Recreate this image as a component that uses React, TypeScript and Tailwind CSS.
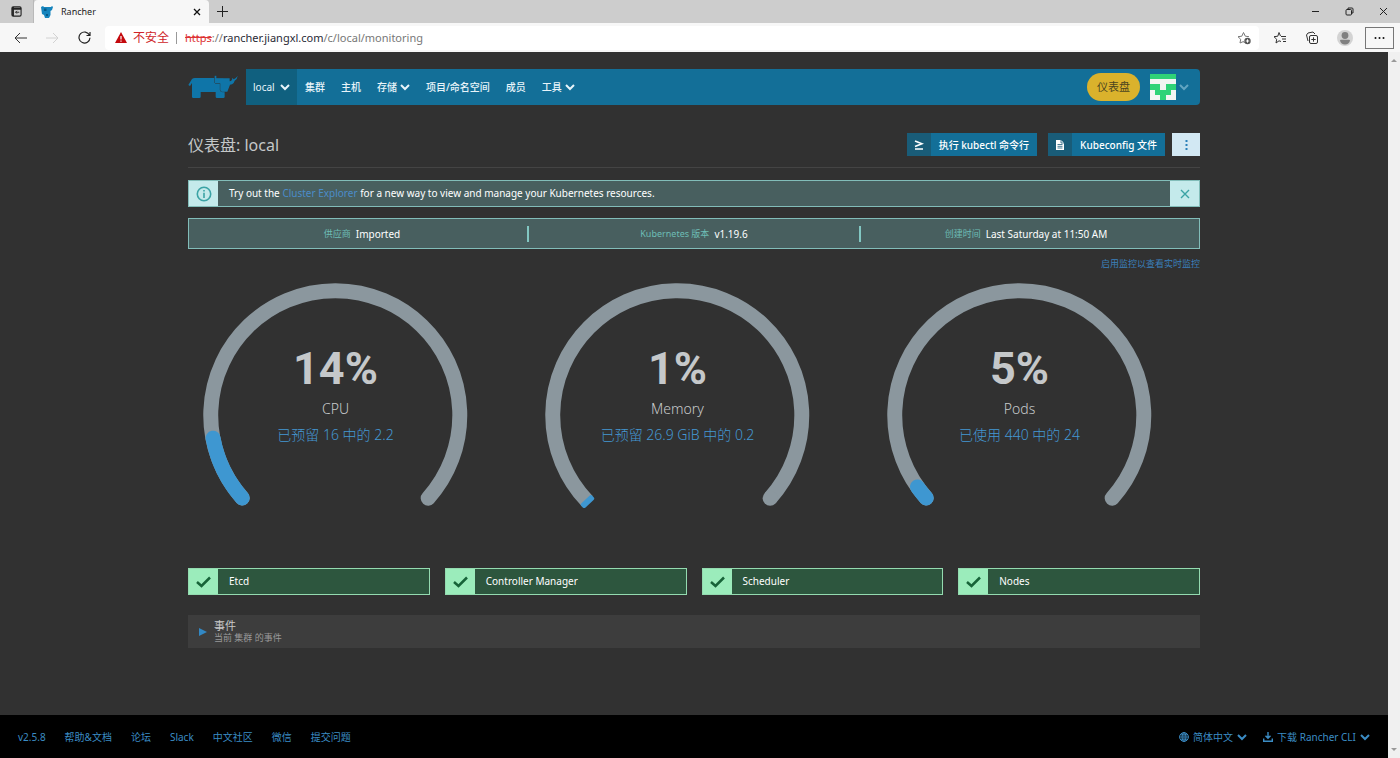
import type { ReactNode } from "react";

const GAUGES = [
  { name: "CPU", value: 14, detail: "已预留 16 中的 2.2", end: 10.5 },
  { name: "Memory", value: 1, detail: "已预留 26.9 GiB 中的 0.2", end: null },
  { name: "Pods", value: 5, detail: "已使用 440 中的 24", end: 35 },
];

const NAV = [
  { label: "集群" },
  { label: "主机" },
  { label: "存储", menu: true },
  { label: "项目/命名空间" },
  { label: "成员" },
  { label: "工具", menu: true },
];

const FOOTER_LINKS = ["v2.5.8", "帮助&文档", "论坛", "Slack", "中文社区", "微信", "提交问题"];

function Chevron({ className = "" }: { className?: string }) {
  return (
    <svg className={`h-[10px] w-[10px] shrink-0 ${className}`} viewBox="0 0 10 10" fill="none" stroke="currentColor" strokeWidth="2">
      <path d="M1 3 L5 7 L9 3" />
    </svg>
  );
}

function Bull() {
  return (
    <svg className="h-6 w-[50px]" viewBox="24 46 150 72" fill="#0f75a8">
      <path d="M25 76 L36 58 Q39 55 45 55 H130 V115 H111 Q107 115 107 111 V97 H62 V111 Q62 115 58 115 H40 Q36 115 36 111 V70 L30 79 Z" />
      <path d="M120 90 H134 V111 Q134 115 130 115 H120 Z" />
      <path
        d="M104 48 H109 V56 H149 V65 Q157 64 157 54 L161 59 Q167 57 173 48 Q172 59 164 63 L161 70 Q157 75 150 75 L142 96 H126 Q121 96 121 91 V71 H108 Q104 71 104 67 Z"
        stroke="#313131"
        strokeWidth="2.5"
        paintOrder="stroke"
      />
    </svg>
  );
}

/* ---------- browser chrome ---------- */

function TabStrip() {
  return (
    <div className="flex h-[23px] items-stretch bg-[#cdcdcd] text-[#222]">
      <div className="flex w-[34px] items-center justify-center border-r border-[#b9b9b9]">
        <svg className="h-[11px] w-[11px]" viewBox="0 0 12 12" fill="none" stroke="#222" strokeWidth="1.2">
          <rect x="1" y="1" width="10" height="10" rx="1.5" />
          <path d="M1 3 H11 M2.2 1 V11" strokeWidth="2" />
          <path d="M9 6.8 H5 M6.5 5.3 L5 6.8 L6.5 8.3" strokeWidth="1" />
        </svg>
      </div>
      <div className="flex w-[175px] items-center rounded-t bg-[#f7f7f7] pr-2 pl-[7px]">
        <svg className="h-3 w-3" viewBox="0 0 12 12">
          <path d="M0 1 L2 0 L3 1 H10 L11 0 L12 1 L11 4 L9.5 5 V9 L8 12 H4 L3 9 L1 8 Z" fill="#1584bd" />
          <path d="M3 2.5 H5.5 V5 H3 Z M5 8 H7 V10 H5 Z" fill="#075a88" />
        </svg>
        <span className="ml-2 flex-1 text-[9px] leading-3">Rancher</span>
        <button aria-label="Close tab">
          <svg className="h-2 w-2" viewBox="0 0 8 8" stroke="#111" strokeWidth="1.3">
            <path d="M1 1 L7 7 M7 1 L1 7" />
          </svg>
        </button>
      </div>
      <button className="flex w-[26px] items-center justify-center" aria-label="New tab">
        <svg className="h-[11px] w-[11px]" viewBox="0 0 11 11" stroke="#222">
          <path d="M5.5 0 V11 M0 5.5 H11" />
        </svg>
      </button>
      <div className="ml-auto flex items-center gap-[25px] pr-3">
        <button aria-label="Minimize">
          <svg className="h-[9px] w-[9px]" viewBox="0 0 9 9" stroke="#222"><path d="M1 4.5 H8" /></svg>
        </button>
        <button aria-label="Restore">
          <svg className="h-[9px] w-[9px]" viewBox="0 0 9 9" fill="none" stroke="#222">
            <rect x="1" y="2.5" width="5.5" height="5.5" rx="1" />
            <path d="M3 2 V1 H7 Q8 1 8 2 V6 H7" />
          </svg>
        </button>
        <button aria-label="Close">
          <svg className="h-[9px] w-[9px]" viewBox="0 0 9 9" stroke="#222"><path d="M1 1 L8 8 M8 1 L1 8" /></svg>
        </button>
      </div>
    </div>
  );
}

function StarIcon({ children, color }: { children: ReactNode; color: string }) {
  return (
    <svg className="h-[14px] w-[14px]" viewBox="0 0 14 14" fill="none" stroke={color} strokeLinejoin="round">
      {children}
    </svg>
  );
}

function AddressBar() {
  return (
    <div className="flex h-[29px] items-center bg-[#f7f7f7]">
      <div className="flex w-[105px] items-center justify-between pr-[14px] pl-[14px]">
        <button aria-label="Back">
          <svg className="h-3 w-[13px]" viewBox="0 0 13 12" fill="none" stroke="#333">
            <path d="M13 6 H1 M6 1 L1 6 L6 11" />
          </svg>
        </button>
        <button aria-label="Forward">
          <svg className="h-3 w-[13px]" viewBox="0 0 13 12" fill="none" stroke="#d2d2d2">
            <path d="M0 6 H12 M7 1 L12 6 L7 11" />
          </svg>
        </button>
        <button aria-label="Reload">
          <svg className="h-[13px] w-[13px]" viewBox="0 0 13 13" fill="none" stroke="#222" strokeWidth="1.2">
            <path d="M11.5 4.2 A5.5 5.5 0 1 0 12 6.8 M12 1 V4.5 H8.5" />
          </svg>
        </button>
      </div>
      <div className="flex h-6 flex-1 items-center rounded bg-white pr-2 pl-[10px] text-[11px] leading-4">
        <svg className="h-3 w-3" viewBox="0 0 12 12">
          <path d="M6 0 L12 11 H0 Z" fill="#c4090d" />
          <path d="M6 4 V7.5 M6 8.5 V9.7" stroke="#fff" strokeWidth="1.2" />
        </svg>
        <span className="ml-[6px] text-[12px] text-[#cf2428]">不安全</span>
        <span className="mr-2 ml-[7px] h-3 w-px bg-[#999]" />
        <span className="text-[#777]">
          <span className="text-[#d33] line-through">https</span>://
          <span className="text-[#2a2a35]">rancher.jiangxl.com</span>/c/local/monitoring
        </span>
        <button className="ml-auto" aria-label="Add to favorites">
          <StarIcon color="#777">
            <path d="M7.5 12 L6.5 10.5 L3 12 L3.7 8.3 L1 5.7 L4.8 5.2 L6.5 1.5 L8.3 5.2 L12 5.7" />
            <circle cx="10.5" cy="10" r="3.2" fill="#555" stroke="none" />
            <path d="M10.5 8.3 V11.7 M8.8 10 H12.2" stroke="#fff" />
          </StarIcon>
        </button>
      </div>
      <div className="flex items-center gap-[18px] pr-[6px] pl-[14px]">
        <button aria-label="Favorites">
          <StarIcon color="#333">
            <path d="M8 10.5 L6 9.8 L3 12 L3.7 8.3 L1 5.7 L4.8 5.2 L6 1.5 L7.5 5 M8 5.5 H13 M9 8 H13 M10 10.5 H13" />
          </StarIcon>
        </button>
        <button aria-label="Collections">
          <StarIcon color="#333">
            <path d="M3 10 L1.5 4 L3 2 L8 1 L10 3" />
            <rect x="4.5" y="4.5" width="8" height="8" rx="1.5" />
            <path d="M8.5 6.3 V10.7 M6.3 8.5 H10.7" />
          </StarIcon>
        </button>
        <button aria-label="Profile">
          <svg className="h-4 w-4" viewBox="0 0 16 16">
            <circle cx="8" cy="8" r="8" fill="#d3d3d3" />
            <circle cx="8" cy="5.5" r="3.4" fill="#808080" />
            <path d="M3 10.5 Q3 9.8 4 9.8 H12 Q13 9.8 13 10.5 Q12 14.5 8 14.5 T3 10.5 Z" fill="#808080" />
          </svg>
        </button>
        <button aria-label="Settings" className="-ml-[6px] flex h-[22px] w-[29px] items-center justify-center border border-[#777]">
          <svg className="h-1 w-[11px]" viewBox="0 0 11 4" fill="#111">
            <circle cx="1.5" cy="2" r="1" /><circle cx="5.5" cy="2" r="1" /><circle cx="9.5" cy="2" r="1" />
          </svg>
        </button>
      </div>
    </div>
  );
}

/* ---------- page ---------- */

function Header() {
  return (
    <header className="flex h-9 items-center">
      <a href="#home" aria-label="Rancher" className="w-[58px] shrink-0">
        <Bull />
      </a>
      <nav className="flex h-9 flex-1 items-center rounded-r-sm bg-[#136f98] text-[10px] leading-4 text-[#e8f4fa]">
        <button className="flex h-full w-[51px] items-center justify-between bg-[#10607f] pr-[7px] pl-[7px]">
          local
          <Chevron />
        </button>
        <svg className="h-3 w-1 shrink-0" viewBox="0 0 4 12" fill="#136f98">
          <path d="M0 0 L4 6 L0 12 Z" />
        </svg>
        <div className="ml-1 flex items-center gap-4">
          {NAV.map((item) =>
            item.menu ? (
              <button key={item.label} className="flex items-center gap-[3px] font-medium">
                {item.label}
                <Chevron />
              </button>
            ) : (
              <a key={item.label} href="#nav" className="font-medium">
                {item.label}
              </a>
            )
          )}
        </div>
        <button className="ml-auto h-7 w-[53px] rounded-full bg-[#dab22c] text-[11px] text-[#4c4520]">仪表盘</button>
        <button className="ml-[10px] flex items-center gap-[3px] pr-[11px]" aria-label="User menu">
          <svg className="h-[26px] w-[26px]" viewBox="0 0 5 5" shapeRendering="crispEdges">
            <rect width="5" height="5" fill="#f2f5f2" />
            <path d="M0 0 H5 V1 H0 Z M0 2 H2 V3 H3 V2 H5 V3 H4 V4 H3 V5 H2 V4 H1 V3 H0 Z" fill="#2fd377" />
          </svg>
          <Chevron className="text-[#62a5c2]" />
        </button>
      </nav>
    </header>
  );
}

function ActionButton({ icon, children }: { icon: ReactNode; children: ReactNode }) {
  return (
    <button className="flex h-[23px] items-center bg-[#136f98] text-[10px] leading-4 font-medium text-white">
      <span className="flex h-full w-6 items-center justify-center bg-[#195c78]">{icon}</span>
      <span className="px-2">{children}</span>
    </button>
  );
}

function TitleBar() {
  return (
    <div className="mt-7 flex items-center border-b border-[#444] pb-[11px]">
      <h1 className="flex-1 text-[16px] leading-5 text-[#c4c7c8]">仪表盘: local</h1>
      <div className="flex gap-[11px]">
        <ActionButton
          icon={
            <svg className="h-[10px] w-[10px]" viewBox="0 0 10 10" fill="none" stroke="#fff" strokeWidth="1.6">
              <path d="M1 1 L8 3.8 L1 6.6 M1 9 H9" />
            </svg>
          }
        >
          执行 kubectl 命令行
        </ActionButton>
        <ActionButton
          icon={
            <svg className="h-[10px] w-2" viewBox="0 0 8 10">
              <path d="M0 0 H5 L8 3 V10 H0 Z" fill="#fff" />
              <path d="M1.5 4.5 H6.5 M1.5 6.3 H6.5 M1.5 8 H6.5 M5 0 V3 H8" stroke="#195c78" strokeWidth="0.8" fill="none" />
            </svg>
          }
        >
          Kubeconfig 文件
        </ActionButton>
      </div>
      <button aria-label="More actions" className="ml-[7px] flex h-[23px] w-7 items-center justify-center bg-[#d2e8f3]">
        <svg className="h-[10px] w-[3px]" viewBox="0 0 3 10" fill="#2a80b9">
          <path d="M0.5 0 h2 v2 h-2 Z M0.5 4 h2 v2 h-2 Z M0.5 8 h2 v2 h-2 Z" />
        </svg>
      </button>
    </div>
  );
}

function Banner() {
  return (
    <div className="mt-3 flex h-[27px] items-stretch border border-[#82bdb9] bg-[#485f5f] text-[10px] leading-4 text-white">
      <span className="flex w-[29px] items-center justify-center bg-[#c4eaeb]">
        <svg className="h-4 w-4" viewBox="0 0 16 16" fill="none" stroke="#3ba3a5" strokeWidth="1.6">
          <circle cx="8" cy="8" r="6.7" />
          <path d="M8 4 V5.5 M8 6.7 V12" />
        </svg>
      </span>
      <p className="flex-1 pt-1 pl-[11px]">
        Try out the{" "}
        <a href="#explorer" className="text-[#4b8cc8]">
          Cluster Explorer
        </a>{" "}
        for a new way to view and manage your Kubernetes resources.
      </p>
      <button aria-label="Dismiss" className="flex w-[29px] items-center justify-center bg-[#c4eaeb]">
        <svg className="h-[10px] w-[10px]" viewBox="0 0 10 10" stroke="#3ba3a5" strokeWidth="1.4">
          <path d="M1 1 L9 9 M9 1 L1 9" />
        </svg>
      </button>
    </div>
  );
}

function InfoItem({ label, value }: { label: string; value: string }) {
  return (
    <div className="flex items-center justify-center gap-[5px]">
      <span className="text-[9px] text-[#6dbdb5]">{label}</span>
      <span className="text-[10px] text-white">{value}</span>
    </div>
  );
}

function ClusterInfo() {
  return (
    <div className="mt-[11px] flex h-[31px] items-center border border-[#82bdb9] bg-[#485f5f] leading-4">
      <div className="flex-1 border-r-2 border-[#82c7c2] pl-2"><InfoItem label="供应商" value="Imported" /></div>
      <div className="flex-1 border-r-2 border-[#82c7c2]"><InfoItem label="Kubernetes 版本" value="v1.19.6" /></div>
      <div className="flex-1 pr-2"><InfoItem label="创建时间" value="Last Saturday at 11:50 AM" /></div>
    </div>
  );
}

// angle is measured below the horizontal, on the left half of the dial
const onDial = (angle: number) => {
  const a = (angle * Math.PI) / 180;
  return `${133 - 125 * Math.cos(a)} ${133 + 125 * Math.sin(a)}`;
};

function Gauge({ name, value, detail, end }: (typeof GAUGES)[number]) {
  return (
    <div className="relative w-[265px]">
      <svg className="w-full" viewBox="0 0 266 226" fill="none" strokeWidth="15">
        <g stroke="#8b979e">
          <path d={`M${onDial(end === null ? 43.5 : 41.5)} A125 125 0 1 1 226 216`} strokeLinecap={end === null ? "butt" : "round"} />
          {end === null && <circle cx="226" cy="216" r="7.5" fill="#8b979e" stroke="none" />}
        </g>
        {end === null ? (
          <rect x="-7.5" y="-2.5" width="15" height="6" rx="2" transform={`translate(${onDial(43.5)}) rotate(-43)`} fill="#3e97d1" />
        ) : (
          <path d={`M${onDial(41.5)} A125 125 0 0 1 ${onDial(end)}`} stroke="#3e97d1" strokeLinecap="round" />
        )}
      </svg>
      <div className="absolute inset-x-0 top-[60px] text-center">
        <p className="text-[45px] leading-[52px] font-bold text-[#c5c8ca]" style={{ fontFamily: "Roboto, sans-serif" }}>
          {value}%
        </p>
        <p className="mt-1 text-[14px] leading-5 font-light text-[#c8cbcc]">{name}</p>
        <p className="mt-[6px] text-[14px] leading-5 font-light text-[#4498d3]">{detail}</p>
      </div>
    </div>
  );
}

function Component({ name }: { name: string }) {
  return (
    <div className="flex h-[27px] items-stretch border border-[#94dbb0] bg-[#2d563e]">
      <span className="flex w-[29px] items-center justify-center bg-[#9becbb]">
        <svg className="h-3 w-[15px]" viewBox="0 0 15 12" fill="none" stroke="#176338" strokeWidth="2.5">
          <path d="M1 6 L5.5 10 L14 1.5" />
        </svg>
      </span>
      <span className="pt-1 pl-[11px] text-[10px] leading-4 text-white">{name}</span>
    </div>
  );
}

function Footer() {
  return (
    <footer className="flex h-[43px] shrink-0 items-center bg-black pr-[18px] pl-[18px] text-[10px] leading-4 text-[#3b8cc4]">
      <div className="flex gap-[19px]">
        {FOOTER_LINKS.map((l) => (
          <a key={l} href="#footer">{l}</a>
        ))}
      </div>
      <button className="ml-auto flex items-center gap-1">
        <svg className="h-[10px] w-[10px]" viewBox="0 0 10 10" fill="none" stroke="currentColor">
          <circle cx="5" cy="5" r="4.4" />
          <ellipse cx="5" cy="5" rx="2" ry="4.4" />
          <path d="M5 0.6 V9.4 M0.6 5 H9.4 M1.3 2.8 H8.7 M1.3 7.2 H8.7" strokeWidth="0.8" />
        </svg>
        简体中文
        <Chevron />
      </button>
      <button className="ml-4 flex items-center gap-1">
        <svg className="h-[10px] w-[10px]" viewBox="0 0 10 10" fill="none" stroke="currentColor" strokeWidth="1.4">
          <path d="M5 0 V6 M2.5 3.7 L5 6.3 L7.5 3.7 M0.7 6.5 V9.2 H9.3 V6.5" />
        </svg>
        下载 Rancher CLI
        <Chevron />
      </button>
    </footer>
  );
}

export default function App() {
  return (
    <div className="flex h-screen flex-col bg-[#313131] font-['Noto_Sans','Noto_Sans_CJK_SC',sans-serif]">
      <TabStrip />
      <AddressBar />
      <div className="flex min-h-0 flex-1">
        <div className="flex min-w-0 flex-1 flex-col">
          <main className="mx-auto w-full max-w-[1012px] flex-1 pt-[17px]">
            <Header />
            <TitleBar />
            <Banner />
            <ClusterInfo />
            <div className="mt-[7px] text-right text-[9px] leading-4">
              <a href="#monitoring" className="text-[#3b80bb]">启用监控以查看实时监控</a>
            </div>
            <div className="mt-[11px] flex justify-between pr-12 pl-[15px]">
              {GAUGES.map((g) => (
                <Gauge key={g.name} {...g} />
              ))}
            </div>
            <div className="mt-[60px] grid grid-cols-4 gap-[15px]">
              {["Etcd", "Controller Manager", "Scheduler", "Nodes"].map((c) => (
                <Component key={c} name={c} />
              ))}
            </div>
            <button className="mt-5 flex h-[33px] w-full items-center bg-[#3d3d3d] pl-[11px] text-left">
              <svg className="h-2 w-2" viewBox="0 0 8 8" fill="#3288c4">
                <path d="M0 0 L8 4 L0 8 Z" />
              </svg>
              <span className="ml-[7px] block">
                <span className="block text-[11px] leading-3 text-[#c8c8c8]">事件</span>
                <span className="block text-[9px] leading-3 text-[#999]">当前 集群 的事件</span>
              </span>
            </button>
          </main>
          <Footer />
        </div>
        {/* scrollbar */}
        <div className="flex w-3 flex-col justify-between bg-[#f0f0f0] py-1">
          <svg className="mx-auto h-2 w-[6px]" viewBox="0 0 6 8" fill="#999"><path d="M0 6 L3 3 L6 6 Z" /></svg>
          <svg className="mx-auto h-2 w-[6px]" viewBox="0 0 6 8" fill="#999"><path d="M0 2 L3 5 L6 2 Z" /></svg>
        </div>
      </div>
    </div>
  );
}
